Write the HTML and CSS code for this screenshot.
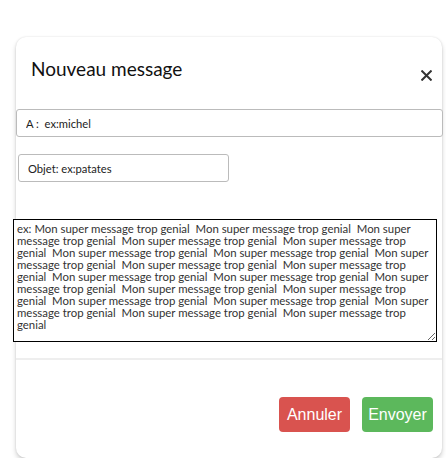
FILE: index.html
```html
<!DOCTYPE html>
<html lang="fr">
<head>
<meta charset="utf-8">
<title>Nouveau message</title>
<link rel="stylesheet" href="styles.css">
</head>
<body>
<div class="page">
  <div class="modal">
    <div class="modal-header">
      <h1 class="title">Nouveau message</h1>
      <button class="close" aria-label="Fermer">
        <svg width="11" height="11" viewBox="0 0 11 11"><path d="M1.2 1.2 L9.8 9.8 M9.8 1.2 L1.2 9.8" stroke="#333" stroke-width="2" stroke-linecap="square" fill="none"/></svg>
      </button>
    </div>
    <div class="modal-body">
      <input class="field field-to" type="text" placeholder="A :  ex:michel">
      <input class="field field-subject" type="text" placeholder="Objet: ex:patates">
      <textarea class="message" wrap="off">ex: Mon super message trop genial  Mon super message trop genial  Mon super
message trop genial  Mon super message trop genial  Mon super message trop
genial  Mon super message trop genial  Mon super message trop genial  Mon super
message trop genial  Mon super message trop genial  Mon super message trop
genial  Mon super message trop genial  Mon super message trop genial  Mon super
message trop genial  Mon super message trop genial  Mon super message trop
genial  Mon super message trop genial  Mon super message trop genial  Mon super
message trop genial  Mon super message trop genial  Mon super message trop
genial</textarea>
    </div>
    <div class="modal-footer">
      <button class="btn btn-cancel">Annuler</button>
      <button class="btn btn-send">Envoyer</button>
    </div>
  </div>
</div>
</body>
</html>
```
FILE: styles.css
```css
* { box-sizing: border-box; }
html, body { margin: 0; padding: 0; background: #fff; }
body { font-family: Lato, "Noto Sans", sans-serif; color: #222; }
.page { padding: 37px 4px 0 16px; }
.modal {
  width: 426px;
  background: #fff;
  border-radius: 10px;
  box-shadow: 0 3px 5px rgba(0,0,0,0.18), 0 0 2px rgba(0,0,0,0.12);
}
.modal-header {
  display: flex;
  align-items: flex-start;
  justify-content: space-between;
  padding: 19px 10px 0 15px;
  height: 72px;
}
.title {
  margin: 0;
  font-family: Lato, sans-serif;
  font-weight: 400;
  font-size: 19px;
  line-height: 26px;
  color: #111;
}
.close {
  margin-top: 14px;
  padding: 0;
  border: 0;
  background: none;
  width: 11px;
  height: 11px;
  display: block;
}
.close svg { display: block; }
.modal-body { display: flex; flex-direction: column; align-items: flex-start; }
.field {
  font-family: Lato, sans-serif;
  font-size: 11.2px;
  color: #333;
  border: 1px solid #bbb;
  border-radius: 3px;
  height: 28px;
  padding: 0 9px;
  background: #fff;
}
.field::placeholder { color: #222; opacity: 1; }
.field-to { width: 427px; margin-left: 0; }
.field-subject { width: 211px; margin: 17px 0 0 2px; }
.message {
  width: 424px;
  height: 123px;
  margin: 37px 0 0 -3px;
  border: 1px solid #000;
  border-radius: 0;
  padding: 3px 0 3px 3px;
  font-family: Lato, sans-serif;
  font-size: 11.4px;
  line-height: 12px;
  color: #333;
  overflow: hidden;
  white-space: pre;
  resize: both;
}
.modal-footer {
  margin-top: 16px;
  border-top: 2px solid #eee;
  display: flex;
  justify-content: flex-end;
  gap: 12px;
  padding: 37px 9px 26px 0;
}
.btn {
  font-family: "Liberation Sans", Arial, sans-serif;
  font-size: 16px;
  color: #fff;
  border: 0;
  border-radius: 4px;
  height: 35px;
  width: 71px;
  padding: 0;
}
.btn-cancel { background: #d9534f; }
.btn-send { background: #5cb85c; }
```
